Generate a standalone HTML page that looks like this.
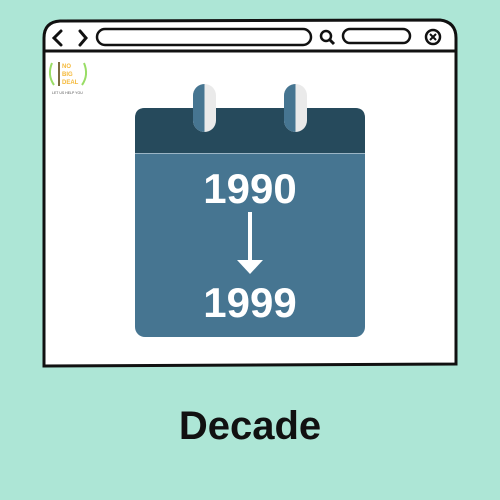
<!DOCTYPE html>
<html><head><style>
body{margin:0;width:500px;height:500px;background:#ade6d6;position:relative;overflow:hidden;font-family:"Liberation Sans",sans-serif}
.a{position:absolute}
</style></head><body>
<svg class="a" style="left:0;top:0" width="500" height="500">
<path d="M44,38 Q44,22 60,21 L440,20 Q456,22 456,38 L456,364 L44,366 Z" fill="#fff" stroke="#111" stroke-width="3"/>
<line x1="44" y1="51" x2="456" y2="51" stroke="#111" stroke-width="3"/>
<path d="M61,31 L54,38 L61,45" fill="none" stroke="#111" stroke-width="3" stroke-linecap="round"/>
<path d="M80,31 L86,38 L80,45" fill="none" stroke="#111" stroke-width="3" stroke-linecap="round"/>
<rect x="97" y="29" width="214" height="16" rx="8" fill="none" stroke="#111" stroke-width="2.5"/>
<circle cx="326" cy="36" r="5" fill="none" stroke="#111" stroke-width="2.5"/>
<line x1="330" y1="40" x2="334" y2="44" stroke="#111" stroke-width="3"/>
<rect x="343" y="29" width="67" height="14" rx="7" fill="none" stroke="#111" stroke-width="2.5"/>
<circle cx="433" cy="37" r="7" fill="none" stroke="#111" stroke-width="2.5"/>
<path d="M430,34 L436,40 M436,34 L430,40" stroke="#111" stroke-width="2"/>
<rect x="135" y="108" width="230" height="229" rx="10" fill="#467591"/>
<path d="M135,153 L135,118 Q135,108 145,108 L355,108 Q365,108 365,118 L365,153 Z" fill="#264a5c"/>
<line x1="135" y1="153.5" x2="365" y2="153.5" stroke="#9bb5c5" stroke-width="1"/>
<rect x="193" y="84" width="23" height="48" rx="11.5" fill="#eaeaea"/>
<path d="M204.5,84 A11.5,11.5 0 0 0 193,95.5 L193,120.5 A11.5,11.5 0 0 0 204.5,132 Z" fill="#467591"/>
<rect x="284" y="84" width="23" height="48" rx="11.5" fill="#eaeaea"/>
<path d="M295.5,84 A11.5,11.5 0 0 0 284,95.5 L284,120.5 A11.5,11.5 0 0 0 295.5,132 Z" fill="#467591"/>
<line x1="250" y1="212" x2="250" y2="263" stroke="#fff" stroke-width="4"/>
<path d="M237,260 L263,260 L250,274 Z" fill="#fff"/>
<text x="250" y="203" text-anchor="middle" font-family="Liberation Sans" font-weight="bold" font-size="42" fill="#fff">1990</text>
<text x="250" y="317" text-anchor="middle" font-family="Liberation Sans" font-weight="bold" font-size="42" fill="#fff">1999</text>
<text x="250" y="439" text-anchor="middle" font-family="Liberation Sans" font-weight="bold" font-size="40" fill="#111">Decade</text>
<path d="M52,63 Q47,75 54,85 M84,63 Q89,75 82,85" fill="none" stroke="#9d6" stroke-width="2"/>
<rect x="58" y="62" width="2" height="24" fill="#7a6a40"/>
<text x="62" y="68" font-size="6" font-weight="bold" fill="#f5b93a">NO</text>
<text x="62" y="76" font-size="6" font-weight="bold" fill="#f5b93a">BIG</text>
<text x="62" y="84" font-size="6" font-weight="bold" fill="#f5b93a">DEAL</text>
<text x="52" y="94" font-size="3.5" fill="#555">LET US HELP YOU</text>
</svg>
</body></html>
